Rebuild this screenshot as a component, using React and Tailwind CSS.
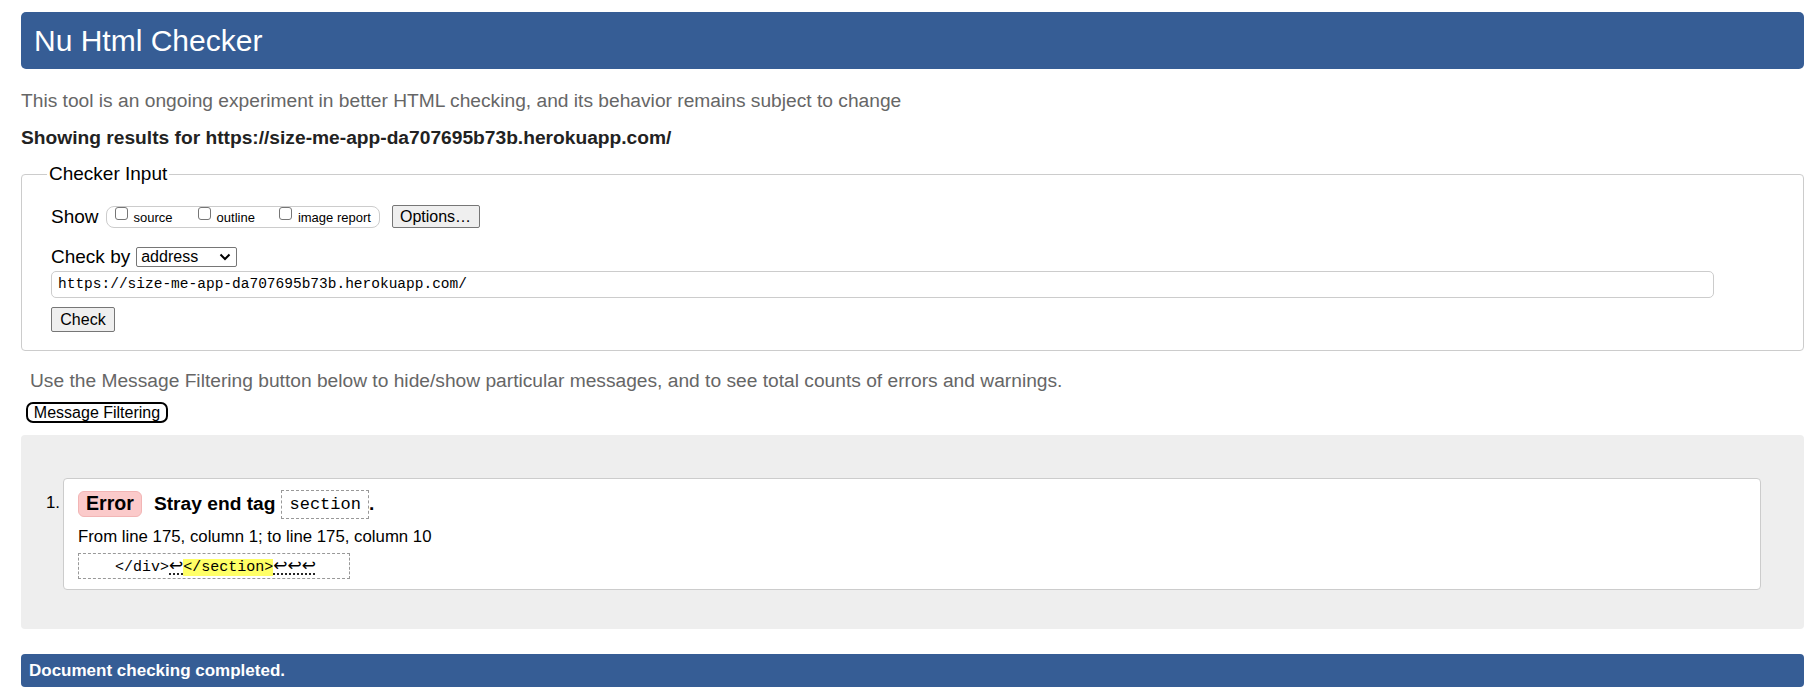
import React from 'react';

const Checkbox = ({ label }) => (
  <label className="flex items-start">
    <span className="w-[13px] h-[13px] border border-[#767676] rounded-[3px] bg-white" />
    <span className="ml-[6px] mt-[3px] text-[13px] leading-[15px] text-black">{label}</span>
  </label>
);

const NativeButton = ({ children, className = '' }) => (
  <button className={`flex items-center justify-center bg-[#efefef] border border-[#767676] rounded-[2px] text-[16px] leading-none text-black ${className}`}>
    {children}
  </button>
);

const App = () => {
  return (
    <div className="min-h-[700px] bg-white pt-[12px] pl-[21px] pr-[15px] pb-[11px] font-['Liberation_Sans',Arial,sans-serif] text-black">
      {/* Title bar */}
      <header className="h-[57px] rounded-[5px] bg-[#365d95] flex items-center px-[13px]">
        <h1 className="text-[30px] leading-none text-white">Nu Html Checker</h1>
      </header>

      <p className="mt-[21px] text-[19.2px] leading-[22px] text-[#666]">
        This tool is an ongoing experiment in better HTML checking, and its behavior remains subject to change
      </p>
      <p className="mt-[15px] text-[19.2px] leading-[22px] font-bold text-[#222]">
        Showing results for https://size-me-app-da707695b73b.herokuapp.com/
      </p>

      {/* Checker input */}
      <fieldset className="mt-[14px] border border-[#ccc] rounded-[4px] pl-[29px] pr-[89px] pb-[18px]">
        <legend className="ml-[-4px] px-[2px] text-[19px] leading-[22px]">Checker Input</legend>

        <div className="mt-[20px] flex items-center h-[23px]">
          <span className="text-[19px] leading-[22px]">Show</span>
          <div className="ml-[7px] h-[22px] w-[274px] border border-[#ccc] rounded-[8px] flex items-start pl-[8px]">
            <Checkbox label="source" />
            <div className="ml-[25px]">
              <Checkbox label="outline" />
            </div>
            <div className="ml-[24px]">
              <Checkbox label="image report" />
            </div>
          </div>
          <NativeButton className="ml-[12px] w-[88px] h-[23px]">Options…</NativeButton>
        </div>

        <div className="mt-[18px] flex items-center h-[22px]">
          <span className="text-[19px] leading-[22px]">Check by</span>
          <div className="ml-[6px] w-[101px] h-[20px] border border-[#767676] rounded-[2px] bg-white flex items-center justify-between pl-[4px] pr-[4px]">
            <span className="text-[16px] leading-none">address</span>
            <svg width="12" height="8" viewBox="0 0 12 8" className="mr-[1px]">
              <polyline points="1.5,1.5 6,6 10.5,1.5" fill="none" stroke="#000" strokeWidth="2" />
            </svg>
          </div>
        </div>

        <div className="mt-[3px] h-[27px] w-full border border-[#ccc] rounded-[5px] bg-white flex items-center pl-[6px]">
          <span className="font-['Liberation_Mono','Courier_New',monospace] text-[14.5px] leading-none">
            https://size-me-app-da707695b73b.herokuapp.com/
          </span>
        </div>

        <div className="mt-[9px] flex">
          <NativeButton className="w-[64px] h-[25px]">Check</NativeButton>
        </div>
      </fieldset>

      <p className="mt-[19px] pl-[9px] text-[19.2px] leading-[22px] text-[#666]">
        Use the Message Filtering button below to hide/show particular messages, and to see total counts of errors and warnings.
      </p>
      <div className="mt-[10px] ml-[5px] flex">
        <button className="w-[142px] h-[21px] border-2 border-black rounded-[7px] bg-white flex items-center justify-center text-[16px] leading-none">
          Message Filtering
        </button>
      </div>

      {/* Results */}
      <div className="mt-[12px] bg-[#eee] rounded-[4px] pt-[43px] pb-[39px] pl-[25px] pr-[43px]">
        <ol className="flex items-start">
          <span className="w-[17px] mt-[15px] text-[16.8px] leading-[20px]">1.</span>
          <li className="flex-1 bg-white border border-[#ccc] rounded-[4px] pl-[14px] pt-[10px] pb-[10px]">
            <div className="flex items-center h-[30px]">
              <span className="h-[26px] px-[7px] rounded-[6px] bg-[#fbcaca] border border-[#f2b5b5] flex items-center font-bold text-[19.6px] leading-none">
                Error
              </span>
              <span className="ml-[12px] font-bold text-[19.2px] leading-[22px]">Stray end tag</span>
              <code className="ml-[6px] h-[29px] px-[7px] border border-dashed border-[#999] flex items-center font-['Liberation_Mono','Courier_New',monospace] text-[17px] leading-none">
                section
              </code>
              <span className="font-bold text-[19.2px] leading-[22px]">.</span>
            </div>
            <p className="mt-[7px] text-[16.8px] leading-[21px]">From line 175, column 1; to line 175, column 10</p>
            <div className="mt-[6px] w-[272px] h-[26px] border border-dashed border-[#999] flex items-center">
              <code className="whitespace-pre font-['Liberation_Mono','Courier_New',monospace] text-[15px] leading-none">
                {'    </div>'}
                <span className="underline decoration-dotted underline-offset-[3px] text-[17px] font-['DejaVu_Sans',sans-serif]">↩</span>
                <span className="bg-[#ff6]">{'</section>'}</span>
                <span className="underline decoration-dotted underline-offset-[3px] text-[17px] font-['DejaVu_Sans',sans-serif]">↩↩↩</span>
              </code>
            </div>
          </li>
        </ol>
      </div>

      <div className="mt-[25px] h-[33px] rounded-[4px] bg-[#365d95] flex items-center px-[8px]">
        <p className="text-[17px] font-bold text-white leading-none">Document checking completed.</p>
      </div>
    </div>
  );
};

export default App;
